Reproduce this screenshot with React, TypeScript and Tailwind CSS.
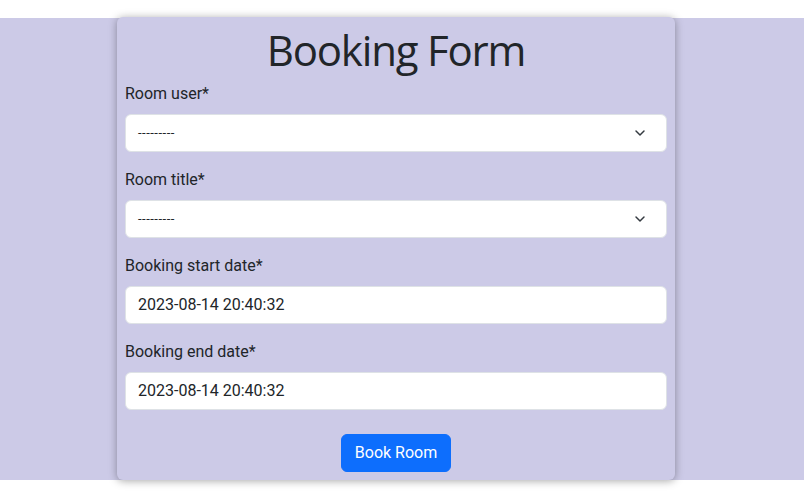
import { ChevronDown } from 'lucide-react';

const fields = [
  { label: 'Room user*', kind: 'select', value: '---------' },
  { label: 'Room title*', kind: 'select', value: '---------' },
  { label: 'Booking start date*', kind: 'input', value: '2023-08-14 20:40:32' },
  { label: 'Booking end date*', kind: 'input', value: '2023-08-14 20:40:32' },
];

const App = () => {
  return (
    <div className="bg-white min-h-screen font-['Roboto',sans-serif] text-[#212529]">
      <div className="mt-[18px] bg-[#cccae7] flex justify-center">
        <div className="w-[558px] -mt-px ml-[-12px] bg-[#cccae7] rounded-md shadow-[0_1px_8px_rgba(0,0,0,0.35)] px-2 pb-[8px]">
          <h1 className="text-center font-['Open_Sans',sans-serif] text-[42px] leading-[65px] tracking-[-1.2px]">
            Booking Form
          </h1>

          {fields.map((f) => (
            <div key={f.label} className="mb-4">
              <label className="block text-base leading-6 mb-2">{f.label}</label>
              <div className="h-[38px] bg-white rounded-md border border-[#dee2e6] flex items-center justify-between pl-3 pr-[18px]">
                <span className={f.kind === 'select' ? 'text-[13px] tracking-[0.5px]' : 'text-base'}>{f.value}</span>
                {f.kind === 'select' && <ChevronDown size={16} strokeWidth={2.2} className="text-[#343a40]" />}
              </div>
            </div>
          ))}

          <div className="flex justify-center pt-[8px]">
            <button className="bg-[#0d6efd] border border-[#0d6efd] text-white text-base leading-6 px-[13px] py-[6px] rounded-md">
              Book Room
            </button>
          </div>
        </div>
      </div>
    </div>
  );
};

export default App;
